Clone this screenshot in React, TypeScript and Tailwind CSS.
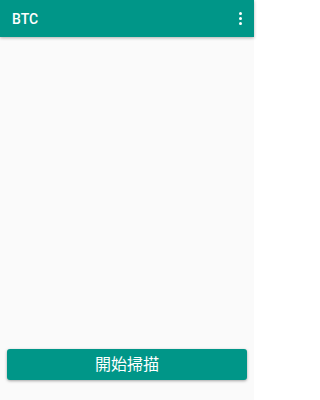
import React from 'react';

const App: React.FC = () => {
  return (
    <div
      className="w-[254px] h-[400px] bg-[#fafafa] flex flex-col"
      style={{ fontFamily: 'Roboto, "Noto Sans CJK TC", sans-serif' }}
    >
      {/* Toolbar */}
      <div className="h-[37px] bg-[#009688] flex items-center justify-between pl-[12px] pr-[12px] shadow-[0_1px_3px_rgba(0,0,0,0.3)] z-10">
        <span className="text-white text-[14px] font-medium leading-none">BTC</span>
        <div className="flex flex-col gap-[2px] items-center">
          <span className="w-[3px] h-[3px] rounded-full bg-white" />
          <span className="w-[3px] h-[3px] rounded-full bg-white" />
          <span className="w-[3px] h-[3px] rounded-full bg-white" />
        </div>
      </div>

      <div className="flex-1" />

      {/* Scan button */}
      <div className="px-[7px] pb-[20px]">
        <button className="w-full h-[31px] bg-[#009688] rounded-[3px] text-white text-[16px] leading-none shadow-[0_1px_3px_rgba(0,0,0,0.35)]">
          開始掃描
        </button>
      </div>
    </div>
  );
};

export default App;
